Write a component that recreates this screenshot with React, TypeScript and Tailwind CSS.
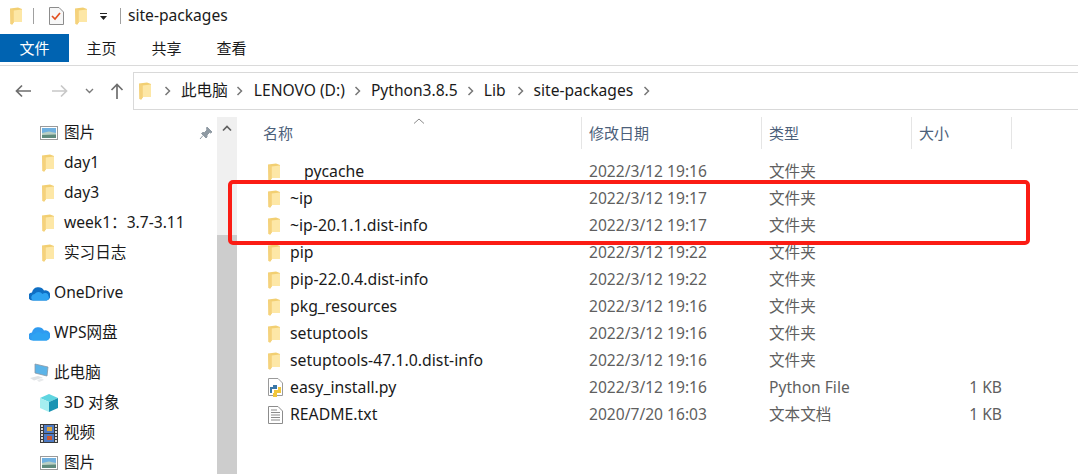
const Folder = () => (
  <svg width="12" height="18" viewBox="0 0 12 18" className="shrink-0">
    <path d="M0 1.5 L8 0.5 L12 2 L12 15 L4 15 L2.5 17.5 L0.5 17 Z" fill="#f2cf72" />
    <path d="M3.5 3.5 L12 2.5 L12 15 L3.5 15 Z" fill="#fde7a6" />
    <path d="M0.5 2 L3.5 3 L3.5 15.5 L2 17.5 L0.5 17 Z" fill="#f5d27c" />
  </svg>
);

const Photo = () => (
  <svg width="18" height="14" viewBox="0 0 18 14" className="shrink-0">
    <rect x="0.5" y="0.5" width="17" height="13" fill="#fff" stroke="#9a9a9a" />
    <rect x="2" y="2" width="14" height="5" fill="#6fb0df" />
    <path d="M2 7 L9 5.5 L16 7 L16 12 L2 12 Z" fill="#b9cfc4" />
    <path d="M2 9 L16 8.5 L16 12 L2 12 Z" fill="#5f8a7c" />
  </svg>
);

const Cloud = ({ fill = "#0f6fc4" }: { fill?: string }) => (
  <svg width="21" height="15" viewBox="0 0 21 15" className="shrink-0">
    <path d="M4 14.5 A4 4 0 0 1 3 6.5 A6.5 6.5 0 0 1 15 4.5 A5 5 0 0 1 17.5 14.5 Z" fill={fill} />
    <path d="M4 14.5 A3.5 3.5 0 0 1 5.5 8 A5 5 0 0 1 13.5 8 A3.5 3.5 0 0 1 19.5 10 A3 3 0 0 1 17.5 14.5 Z" fill="#2ea3f2" />
  </svg>
);

const Computer = () => (
  <svg width="21" height="20" viewBox="0 0 21 20" className="shrink-0">
    <path d="M6 1 L19 4 L18 13 L6 10 Z" fill="#5cb4e8" stroke="#8a98a4" strokeWidth="0.8" />
    <path d="M1 15 L9 13 L14 14.5 L5 17.5 Z" fill="#dfe3e6" />
    <path d="M8 17 L13 15.5 L15 17 L10 19 Z" fill="#e8eaec" />
  </svg>
);

const Cube = () => (
  <svg width="18" height="18" viewBox="0 0 18 18" className="shrink-0">
    <path d="M9 0 L18 4 L9 8 L0 4 Z" fill="#5fd5e0" />
    <path d="M0 4 L9 8 L9 18 L0 14 Z" fill="#a5eef0" />
    <path d="M18 4 L9 8 L9 18 L18 14 Z" fill="#1a93b3" />
  </svg>
);

const Film = () => (
  <svg width="18" height="19" viewBox="0 0 18 19" className="shrink-0">
    <rect width="18" height="19" fill="#3a3a3a" />
    <rect x="4" y="1" width="10" height="8" fill="#4d7ac4" />
    <rect x="4" y="10" width="10" height="8" fill="#4d7ac4" />
    <rect x="7" y="3" width="5" height="4" fill="#d9a33a" />
    <rect x="7" y="12" width="5" height="4" fill="#c9562f" />
    {[1, 4, 7, 10, 13, 16].map((y) => (
      <g key={y}>
        <rect x="1" y={y} width="2" height="2" fill="#ddd" />
        <rect x="15" y={y} width="2" height="2" fill="#ddd" />
      </g>
    ))}
  </svg>
);

const Chevron = () => (
  <svg width="8" height="10" viewBox="0 0 8 10" className="shrink-0">
    <path d="M1.5 1 L5.5 5 L1.5 9" fill="none" stroke="#777" strokeWidth="1.5" />
  </svg>
);

const PyFile = () => (
  <svg width="16" height="20" viewBox="0 0 16 20" className="shrink-0">
    <path d="M0.5 0.5 H10 L14.5 5 V17.5 H0.5 Z" fill="#fff" stroke="#9a9a9a" />
    <path d="M5 7 H9 V11 H4 V15 H2 V9 H5 Z" fill="#3a77a8" />
    <path d="M10 9 H13 V15 H9 V19 H5 V15 H6 V12 H10 Z" fill="#f1c63c" />
  </svg>
);

const TxtFile = () => (
  <svg width="15" height="18" viewBox="0 0 15 18" className="shrink-0">
    <path d="M0.5 0.5 H10 L14.5 5 V17.5 H0.5 Z" fill="#fff" stroke="#8c8c8c" />
    <path d="M3 4 H9 M3 6.5 H12 M3 9 H12 M3 11.5 H12 M3 14 H12" stroke="#8c8c8c" />
  </svg>
);

const side = [
  { pad: "pl-[40px]", icon: <Photo />, label: "图片", pin: true },
  { pad: "pl-[42px]", icon: <Folder />, label: "day1" },
  { pad: "pl-[42px]", icon: <Folder />, label: "day3" },
  { pad: "pl-[42px]", icon: <Folder />, label: "week1：3.7-3.11" },
  { pad: "pl-[42px]", icon: <Folder />, label: "实习日志" },
];

const rows: [string, string, string, string, React.ReactNode?][] = [
  ["pycache", "2022/3/12 19:16", "文件夹", ""],
  ["~ip", "2022/3/12 19:17", "文件夹", ""],
  ["~ip-20.1.1.dist-info", "2022/3/12 19:17", "文件夹", ""],
  ["pip", "2022/3/12 19:22", "文件夹", ""],
  ["pip-22.0.4.dist-info", "2022/3/12 19:22", "文件夹", ""],
  ["pkg_resources", "2022/3/12 19:16", "文件夹", ""],
  ["setuptools", "2022/3/12 19:16", "文件夹", ""],
  ["setuptools-47.1.0.dist-info", "2022/3/12 19:16", "文件夹", ""],
  ["easy_install.py", "2022/3/12 19:16", "Python File", "1 KB", <PyFile key="p" />],
  ["README.txt", "2020/7/20 16:03", "文本文档", "1 KB", <TxtFile key="t" />],
];

export default function App() {
  return (
    <div className="relative h-[474px] w-[1078px] overflow-hidden bg-white text-[15.6px] leading-none text-[#1a1a1a] [font-family:'Noto_Sans','Noto_Sans_CJK_SC',sans-serif]">
      {/* title bar */}
      <div className="flex h-[34px] items-center pb-[3px]">
        <div className="ml-[10px]"><Folder /></div>
        <div className="ml-[11px] h-[16px] w-px bg-[#a0a0a0]" />
        <svg width="15" height="18" viewBox="0 0 15 18" className="ml-[15px]">
          <path d="M0.5 0.5 H10 L14.5 5 V17.5 H0.5 Z" fill="#f7f7f7" stroke="#8c8c8c" />
          <path d="M3 9 L6 12 L11 6" fill="none" stroke="#e2501f" strokeWidth="1.7" />
        </svg>
        <div className="ml-[11px]"><Folder /></div>
        <svg width="9" height="8" viewBox="0 0 9 8" className="ml-[12px] mt-[2px]">
          <path d="M1 0.5 H8" stroke="#222" />
          <path d="M1 3 H8 L4.5 7 Z" fill="#222" />
        </svg>
        <div className="ml-[12px] h-[16px] w-px bg-[#a0a0a0]" />
        <span className="ml-[7px]">site-packages</span>
      </div>

      {/* ribbon tabs */}
      <div className="flex h-[32px] border-b border-[#dadada] text-[15px]">
        <div className="flex h-[28px] w-[69px] items-center justify-center bg-[#0063b1] text-white">文件</div>
        <div className="flex h-[28px] w-[65px] items-center justify-center">主页</div>
        <div className="flex h-[28px] w-[65px] items-center justify-center">共享</div>
        <div className="flex h-[28px] w-[65px] items-center justify-center">查看</div>
      </div>

      {/* address row */}
      <div className="mt-[5px] flex h-[39px] items-center">
        <div className="flex w-[133px] items-center">
          <svg width="16" height="14" viewBox="0 0 16 14" className="ml-[15px]">
            <path d="M7 1.5 L1.5 7 L7 12.5 M2 7 H16" fill="none" stroke="#6e6e6e" strokeWidth="1.7" />
          </svg>
          <svg width="16" height="14" viewBox="0 0 16 14" className="ml-[21px]">
            <path d="M9 1.5 L14.5 7 L9 12.5 M0 7 H14" fill="none" stroke="#c8c8c8" strokeWidth="1.7" />
          </svg>
          <svg width="9" height="6" viewBox="0 0 9 6" className="ml-[17px]">
            <path d="M1 1 L4.5 4.5 L8 1" fill="none" stroke="#7a7a7a" strokeWidth="1.4" />
          </svg>
          <svg width="14" height="16" viewBox="0 0 14 16" className="ml-[16px]">
            <path d="M1.5 7 L7 1.5 L12.5 7 M7 2 V16" fill="none" stroke="#6e6e6e" strokeWidth="1.7" />
          </svg>
        </div>
        <div className="flex h-[38px] flex-1 items-center border-y border-l border-[#d9d9d9] pl-[5px]">
          <Folder />
          <span className="ml-[13px]"><Chevron /></span>
          <span className="ml-[9px]">此电脑</span>
          <span className="ml-[8px]"><Chevron /></span>
          <span className="ml-[10px]">LENOVO (D:)</span>
          <span className="ml-[9px]"><Chevron /></span>
          <span className="ml-[9px]">Python3.8.5</span>
          <span className="ml-[9px]"><Chevron /></span>
          <span className="ml-[9px]">Lib</span>
          <span className="ml-[11px]"><Chevron /></span>
          <span className="ml-[9px]">site-packages</span>
          <span className="ml-[10px]"><Chevron /></span>
        </div>
      </div>

      {/* body */}
      <div className="mt-[7px] flex h-[358px]">
        {/* nav pane */}
        <div className="w-[217px] shrink-0 pt-[1px]">
          {side.map((s) => (
            <div key={s.label} className={`flex h-[30px] items-center ${s.pad}`}>
              {s.icon}
              <span className={s.pin ? "ml-[6px]" : "ml-[10px]"}>{s.label}</span>
              {s.pin && (
                <svg width="14" height="14" viewBox="0 0 14 14" className="ml-auto mr-[4px]">
                  <path d="M8 1 L13 6 L11.5 7 L10.5 6.5 L8 9 L8 11 L7 12 L2.5 7.5 L3.5 6.5 L5.5 6.5 L8 4 L7.5 2.5 Z M4 9.5 L1 13" fill="#8f9aa3" stroke="#8f9aa3" />
                </svg>
              )}
            </div>
          ))}
          <div className="mt-[10px] flex h-[30px] items-center pl-[29px]">
            <Cloud />
            <span className="ml-[4px]">OneDrive</span>
          </div>
          <div className="mt-[10px] flex h-[30px] items-center pl-[29px]">
            <Cloud fill="#2f9bf0" />
            <span className="ml-[4px]">WPS网盘</span>
          </div>
          <div className="mt-[10px] flex h-[30px] items-center pl-[29px]">
            <Computer />
            <span className="ml-[4px]">此电脑</span>
          </div>
          <div className="flex h-[30px] items-center pl-[40px]">
            <Cube />
            <span className="ml-[6px]">3D 对象</span>
          </div>
          <div className="flex h-[30px] items-center pl-[40px]">
            <Film />
            <span className="ml-[6px]">视频</span>
          </div>
          <div className="flex h-[30px] items-center pl-[40px]">
            <Photo />
            <span className="ml-[6px]">图片</span>
          </div>
        </div>

        {/* scrollbar */}
        <div className="flex w-[20px] shrink-0 flex-col bg-[#f0f0f0]">
          <div className="flex h-[118px] justify-center pt-[8px]">
            <svg width="10" height="7" viewBox="0 0 10 7">
              <path d="M1 5.5 L5 1.5 L9 5.5" fill="none" stroke="#606060" strokeWidth="1.7" />
            </svg>
          </div>
          <div className="flex-1 bg-[#cdcdcd]" />
        </div>

        {/* list */}
        <div className="flex-1 pl-[1px]">
          <div className="relative flex h-[32px] items-stretch text-[15px] text-[#4c607a]">
            <div className="flex w-[344px] items-center border-r border-[#e5e5e5] pl-[25px]">名称</div>
            <div className="flex w-[180px] items-center border-r border-[#e5e5e5] pl-[7px]">修改日期</div>
            <div className="flex w-[150px] items-center border-r border-[#e5e5e5] pl-[7px]">类型</div>
            <div className="flex w-[100px] items-center border-r border-[#e5e5e5] pl-[7px]">大小</div>
            <svg width="12" height="6" viewBox="0 0 12 6" className="absolute left-[175px] top-[1px]">
              <path d="M1 5.5 L6 1 L11 5.5" fill="none" stroke="#8a8a8a" />
            </svg>
          </div>
          <div className="pt-[9px]">
            {rows.map(([name, date, type, size, icon]) => (
              <div key={name} className="flex h-[27px] items-center">
                <div className="flex w-[343px] items-center pl-[30px] text-[15.8px]">
                  <div className="flex w-[22px] justify-start">{icon ?? <Folder />}</div>
                  <span className={name === "pycache" ? "pl-[14px]" : ""}>{name}</span>
                </div>
                <div className="w-[180px] pl-[8px] text-[#5f5f5f]">{date}</div>
                <div className="w-[150px] pl-[8px] text-[#5f5f5f]">{type}</div>
                <div className="w-[91px] text-right text-[#5f5f5f]">{size}</div>
              </div>
            ))}
          </div>
        </div>
      </div>

      {/* red annotation */}
      <div className="absolute left-[228px] top-[180px] h-[65px] w-[802px] rounded-[5px] border-[4px] border-[#fb1c14]" />
    </div>
  );
}
